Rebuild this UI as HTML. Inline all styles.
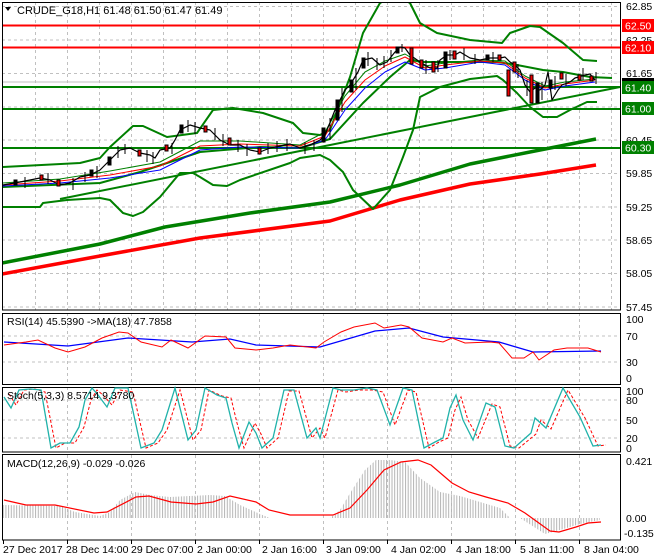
<!DOCTYPE html>
<html><head><meta charset="utf-8">
<style>
html,body{margin:0;padding:0;background:#fff;}
svg{display:block;font-family:"Liberation Sans",sans-serif;}
</style></head><body>
<svg width="660" height="560" viewBox="0 0 660 560" xmlns="http://www.w3.org/2000/svg">
<defs>
<pattern id="hist" width="2.7" height="10" patternUnits="userSpaceOnUse"><rect x="0" y="0" width="1" height="10" fill="#b4b4b4"/></pattern>
<clipPath id="cm"><rect x="2" y="2" width="619" height="308"/></clipPath>
</defs>
<rect width="660" height="560" fill="#fff"/>
<g stroke="#c0c0c0" stroke-dasharray="3,3" stroke-width="1">
<path d="M35.5 2V310M67.5 2V310M99.5 2V310M131.5 2V310M163.5 2V310M195.5 2V310M227.5 2V310M259.5 2V310M291.5 2V310M323.5 2V310M355.5 2V310M387.5 2V310M419.5 2V310M451.5 2V310M483.5 2V310M515.5 2V310M547.5 2V310M579.5 2V310M611.5 2V310"/>
<path d="M2 6.5H621M2 40H621M2 73.5H621M2 107H621M2 140H621M2 173.5H621M2 207H621M2 240H621M2 273.5H621M2 307H621"/>
<path d="M67.5 313V384M131.5 313V384M195.5 313V384M259.5 313V384M323.5 313V384M387.5 313V384M451.5 313V384M515.5 313V384M579.5 313V384"/>
<path d="M67.5 387V452M131.5 387V452M195.5 387V452M259.5 387V452M323.5 387V452M387.5 387V452M451.5 387V452M515.5 387V452M579.5 387V452"/>
<path d="M67.5 455V540M131.5 455V540M195.5 455V540M259.5 455V540M323.5 455V540M387.5 455V540M451.5 455V540M515.5 455V540M579.5 455V540"/>
<path d="M2 336H621M2 362H621M2 400H621M2 420H621M2 438H621"/>
</g>
<g clip-path="url(#cm)" fill="none" stroke-linejoin="round">
<line x1="2" y1="82" x2="621" y2="82" stroke="#c0c0c0" stroke-width="1"/>
<line x1="2" y1="25.5" x2="621" y2="25.5" stroke="#f00" stroke-width="2"/>
<line x1="2" y1="47.5" x2="621" y2="47.5" stroke="#f00" stroke-width="2"/>
<line x1="2" y1="87" x2="621" y2="87" stroke="#008000" stroke-width="2"/>
<line x1="2" y1="109" x2="621" y2="109" stroke="#008000" stroke-width="2"/>
<line x1="2" y1="148" x2="621" y2="148" stroke="#008000" stroke-width="2"/>
<polyline points="2,263 100,244 165,227 250,213 330,202 400,185 470,164 540,150 596,139" stroke="#008000" stroke-width="3.5"/>
<polyline points="2,274 100,256 200,238 330,221 400,200 470,184 540,174 596,165" stroke="#f00" stroke-width="3.5"/>
<polyline points="60,199 620,87" stroke="#008000" stroke-width="2"/>
<polyline points="3,167 80,163 100,158 110,147 133,126 143,126 167,137 197,133 213,110 233,108 263,113 293,123 303,133 320,135 330,130 350,77 363,33 380,3 395,-5 410,3 420,23 437,33 470,40 502,43 510,33 530,26 540,27 563,43 583,60 597,61" stroke="#008000" stroke-width="2"/>
<polyline points="3,187 100,183 140,172 200,152 260,147 300,148 330,139 363,103 390,77 410,60 423,62 497,62 517,65 543,70 563,72 590,77 612,78" stroke="#008000" stroke-width="2"/>
<polyline points="3,207 40,207 43,203 67,200 100,198 110,200 123,213 133,216 143,212 160,197 180,173 193,173 200,177 213,185 227,186 240,180 290,163 300,158 320,155 330,160 343,172 353,190 373,209 390,190 403,157 413,130 420,97 440,87 470,79 497,76 503,80 517,93 530,107 543,117 557,117 570,110 587,102 597,102" stroke="#008000" stroke-width="2"/>
<polyline points="3,186 60,183 110,178 160,170 200,150 240,147 300,148 325,140 345,110 365,88 385,72 405,62 425,70 445,68 480,62 505,65 525,80 545,90 565,86 595,82" stroke="#00f" stroke-width="1"/>
<polyline points="3,185 60,181 110,175 160,166 200,146 240,144 300,146 325,136 345,102 365,80 385,66 405,57 425,68 445,65 480,61 505,63 525,78 545,88 565,84 595,80" stroke="#f00" stroke-width="1"/>
<polyline points="3,183 60,179 110,171 160,162 200,141 240,141 300,145 325,132 345,96 365,72 385,61 405,54 425,66 445,63 480,60 505,61 525,76 545,86 565,82 595,79" stroke="#008000" stroke-width="1"/>
<polyline points="3,185 20,182 40,178 50,180 60,185 70,183 80,177 90,175 100,170 110,160 115,155 120,150 130,148 140,153 150,155 155,158 160,150 170,148 175,140 180,130 190,125 200,128 210,130 220,140 230,145 240,145 250,150 260,152 270,148 280,146 290,144 300,148 310,145 320,140 325,135 335,110 345,90 350,85 358,72 363,60 372,58 380,65 387,62 395,52 400,47 405,48 410,55 420,62 430,68 437,68 440,60 447,55 455,55 460,52 470,58 480,60 490,58 500,58 505,57 510,62 515,65 520,70 525,85 530,92 535,88 540,90 545,85 548,72 552,100 558,90 562,85 570,82 575,78 585,75 590,74 595,80" stroke="#000" stroke-width="1.2"/>
<path stroke="#000" stroke-width="1" d="M25 177V188M48 173V184M73 178V190M85 172V182M97 166V178M118 146V158M125 144V154M147 150V162M153 152V164M172 143V154M188 120V132M195 122V134M215 128V140M223 134V146M238 140V152M247 144V156M268 143V154M277 141V152M287 139V151M305 142V154M314 140V151M330 118V140M342 88V112M356 68V90M368 52V66M377 58V70M384 56V68M391 50V62M402 44V52M426 60V74M438 60V72M450 50V60M464 48V60M475 54V64M493 52V62M518 64V78M527 80V96M542 82V100M555 76V90M566 74V86M583 68V80M596 72V84"/>
</g>
<g stroke="#000" stroke-width="1">
<rect x="14" y="180" width="3" height="5" fill="#000"/><rect x="40" y="175" width="3" height="5" fill="#e00"/><rect x="57" y="180" width="3" height="6" fill="#e00"/>
<rect x="90" y="170" width="3" height="6" fill="#000"/><rect x="108" y="157" width="3" height="8" fill="#000"/><rect x="138" y="150" width="3" height="6" fill="#e00"/>
<rect x="165" y="145" width="3" height="6" fill="#e00"/><rect x="180" y="125" width="3" height="8" fill="#000"/><rect x="204" y="126" width="3" height="6" fill="#e00"/>
<rect x="228" y="138" width="3" height="7" fill="#e00"/><rect x="258" y="148" width="3" height="6" fill="#e00"/><rect x="322" y="128" width="3" height="14" fill="#000"/>
<rect x="336" y="100" width="3" height="20" fill="#000"/><rect x="350" y="80" width="3" height="12" fill="#000"/><rect x="362" y="58" width="3" height="10" fill="#000"/>
<rect x="396" y="47" width="3" height="6" fill="#000"/><rect x="410" y="48" width="3" height="16" fill="#e00"/><rect x="420" y="60" width="3" height="8" fill="#e00"/>
<rect x="432" y="62" width="3" height="10" fill="#e00"/><rect x="444" y="52" width="3" height="16" fill="#000"/><rect x="453" y="51" width="3" height="8" fill="#e00"/>
<rect x="486" y="55" width="3" height="5" fill="#000"/><rect x="498" y="55" width="3" height="5" fill="#e00"/><rect x="513" y="62" width="3" height="10" fill="#e00"/>
<rect x="507" y="70" width="3" height="26" fill="#e00"/><rect x="530" y="75" width="3" height="28" fill="#e00"/><rect x="536" y="83" width="3" height="20" fill="#000"/>
<rect x="549" y="80" width="3" height="8" fill="#000"/><rect x="560" y="73" width="3" height="6" fill="#e00"/><rect x="578" y="75" width="3" height="5" fill="#e00"/><rect x="590" y="76" width="3" height="5" fill="#e00"/>
</g>
<g fill="none" stroke="#000" stroke-width="1">
<rect x="2.5" y="2.5" width="618" height="307.5"/>
<rect x="2.5" y="313.5" width="618" height="71"/>
<rect x="2.5" y="387.5" width="618" height="64.5"/>
<rect x="2.5" y="454.5" width="618" height="85.5"/>
</g>
<g fill="none" stroke-width="1">
<polyline stroke="#00f" stroke-width="1.3" points="4,342 68,346 128,338 192,342 230,339 256,345 320,347 375,331 409,328 443,337 499,342 533,352 601,351"/>
<polyline stroke="#f00" points="4,345 26,342 38,340 55,348 68,352 85,347 102,338 119,332 128,333 141,342 162,347 171,340 188,348 205,336 226,337 235,348 256,350 273,348 290,345 316,348 324,342 341,332 354,327 375,323 384,328 401,325 409,327 422,338 443,342 452,338 465,343 490,342 499,343 512,358 524,358 533,352 539,360 554,350 567,348 588,348 601,352"/>
</g>
<g fill="none" stroke-width="1">
<polyline stroke="#f00" stroke-dasharray="3,2" points="9,394 16,405 24,390 35,389 45,392 56,448 65,443 75,443 84,427 91,400 97,390 103,395 112,405 120,390 133,392 146,448 158,443 167,430 180,390 193,440 201,430 209,390 222,396 231,398 237,423 244,448 255,423 261,434 267,448 278,438 289,391 299,391 312,438 320,428 325,438 338,390 346,392 359,390 372,390 383,392 395,425 408,390 416,392 429,448 439,442 448,438 455,410 461,397 468,420 478,438 492,404 500,407 510,446 519,448 536,434 541,420 551,429 568,390 585,418 598,446 606,445"/>
<polyline stroke="#20b2aa" stroke-width="1.3" points="4,397 11,408 19,390 30,389 41,390 51,448 60,443 70,443 79,427 85,400 92,388 98,395 107,407 115,388 128,388 141,448 154,443 162,430 175,388 188,440 196,430 205,388 217,395 226,398 232,423 239,448 249,422 256,433 262,448 273,438 284,390 294,390 307,438 316,428 320,438 333,388 341,390 354,390 367,388 377,390 390,425 403,388 412,390 424,448 435,442 443,438 450,408 456,395 463,420 473,440 486,403 495,407 505,446 514,448 531,433 535,418 546,428 563,388 580,417 593,446 601,445"/>
</g>
<polygon fill="url(#hist)" points="3,518 3,505 60,506 75,512 100,516 110,512 120,500 135,492 150,495 170,497 190,496 210,495 225,496 240,505 260,514 270,518 330,518 340,510 352,490 365,470 376,460 390,460 405,462 420,478 440,492 460,496 480,502 500,508 510,518 520,518 545,534 560,530 580,524 600,520 600,518 3,518"/>
<polyline fill="none" stroke="#f00" stroke-width="1.2" points="4,500 26,505 55,505 94,513 107,512 136,497 149,496 171,502 196,504 213,502 230,496 256,502 269,510 290,515 333,515 350,508 367,490 384,470 401,462 418,460 431,465 452,483 469,492 486,497 508,503 525,513 550,531 559,532 576,527 588,523 601,522"/>
<polygon points="5,7 11,7 8,11" fill="#000"/>
<text x="17" y="14" font-size="11" fill="#000">CRUDE_G18,H1  61.48 61.50 61.47 61.49</text>
<text x="7" y="325" font-size="10.5" fill="#000">RSI(14) 45.5390  -&gt;MA(18) 47.7858</text>
<text x="7" y="399" font-size="10.5" fill="#000">Stoch(5,3,3) 8.5714 9.3780</text>
<text x="7" y="467" font-size="10.5" fill="#000">MACD(12,26,9) -0.029 -0.026</text>
<g font-size="10.5" fill="#000">
<text x="626" y="10">62.85</text><text x="626" y="44">62.25</text><text x="626" y="77">61.65</text>
<text x="626" y="144">60.45</text><text x="626" y="177">59.85</text><text x="626" y="211">59.25</text>
<text x="626" y="244">58.65</text><text x="626" y="277">58.05</text><text x="626" y="311">57.45</text>
<text x="626" y="323">100</text><text x="626" y="340">70</text><text x="626" y="366">30</text><text x="626" y="382">0</text>
<text x="626" y="395">100</text><text x="626" y="404">80</text><text x="626" y="424">50</text><text x="626" y="442">20</text><text x="626" y="452">0</text>
<text x="626" y="465">0.421</text><text x="626" y="522">0.00</text><text x="624" y="537">-0.135</text>
</g>
<rect x="622" y="78" width="32" height="7" fill="#000"/>
<g font-size="10.5" fill="#fff">
<rect x="622" y="19" width="32" height="13" fill="#f00"/><text x="625" y="29.5">62.50</text>
<rect x="622" y="41" width="32" height="13" fill="#f00"/><text x="625" y="51.5">62.10</text>
<rect x="622" y="81" width="32" height="13" fill="#008000"/><text x="625" y="91.5">61.40</text>
<rect x="622" y="102" width="32" height="13" fill="#008000"/><text x="625" y="112.5">61.00</text>
<rect x="622" y="141" width="32" height="13" fill="#008000"/><text x="625" y="151.5">60.30</text>
</g>
<g stroke="#000"><path d="M3.5 540V544M67.5 540V544M131.5 540V544M195.5 540V544M259.5 540V544M323.5 540V544M387.5 540V544M451.5 540V544M515.5 540V544M579.5 540V544"/></g>
<g font-size="10.5" fill="#000">
<text x="3" y="553">27 Dec 2017</text><text x="66" y="553">28 Dec 14:00</text><text x="131" y="553">29 Dec 07:00</text>
<text x="197" y="553">2 Jan 00:00</text><text x="262" y="553">2 Jan 16:00</text><text x="326" y="553">3 Jan 09:00</text>
<text x="391" y="553">4 Jan 02:00</text><text x="456" y="553">4 Jan 18:00</text><text x="520" y="553">5 Jan 11:00</text>
<text x="584" y="553">8 Jan 04:00</text>
</g>
</svg>
</body></html>
